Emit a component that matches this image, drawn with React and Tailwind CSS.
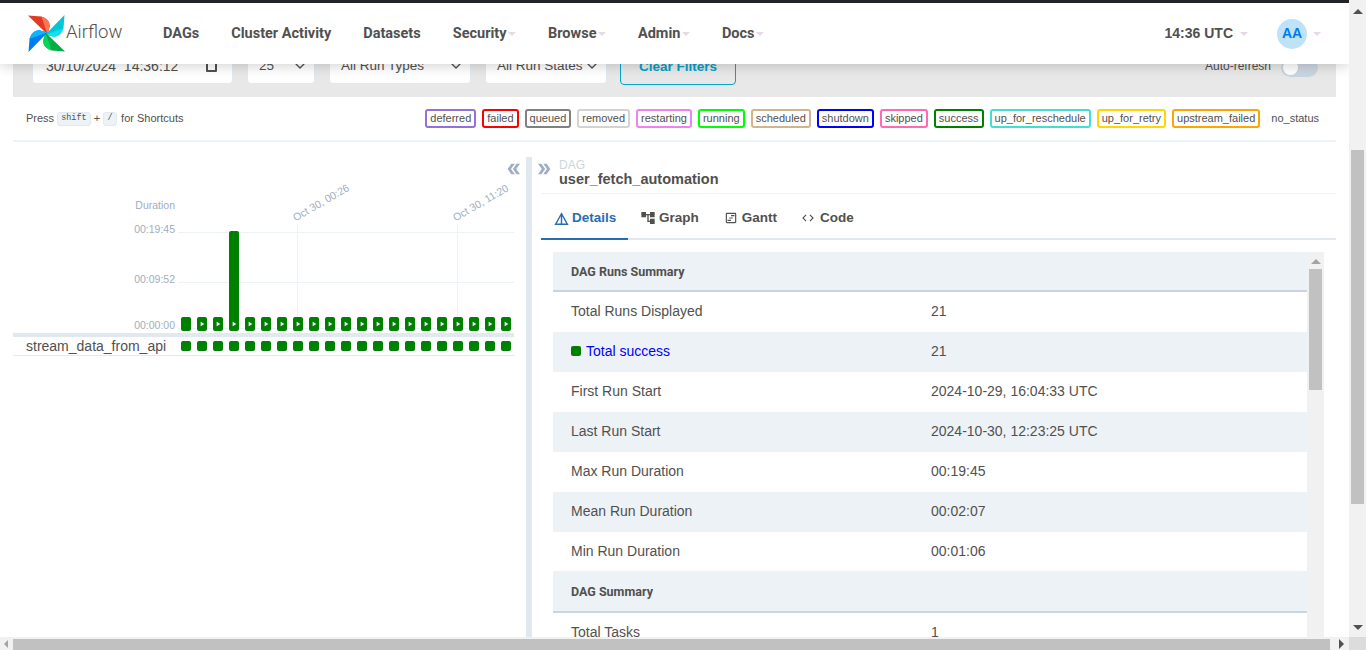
import { MdDetails, MdAccountTree, MdOutlineViewTimeline, MdCode, MdDoubleArrow, MdPlayArrow } from "react-icons/md";
import { FiChevronDown } from "react-icons/fi";

const sans = "font-['Liberation_Sans',Arial,sans-serif]";
const head = "font-['Roboto',Arial,sans-serif]";

const navItems = [
  { label: "DAGs" },
  { label: "Cluster Activity" },
  { label: "Datasets" },
  { label: "Security", caret: true },
  { label: "Browse", caret: true },
  { label: "Admin", caret: true },
  { label: "Docs", caret: true },
];

const legend = [
  { label: "deferred", border: "border-[#9370db]" },
  { label: "failed", border: "border-[#ff0000]" },
  { label: "queued", border: "border-[#808080]" },
  { label: "removed", border: "border-[#d3d3d3]" },
  { label: "restarting", border: "border-[#ee82ee]" },
  { label: "running", border: "border-[#00ff00]" },
  { label: "scheduled", border: "border-[#d2b48c]" },
  { label: "shutdown", border: "border-[#0000ff]" },
  { label: "skipped", border: "border-[#ff69b4]" },
  { label: "success", border: "border-[#008000]" },
  { label: "up_for_reschedule", border: "border-[#40e0d0]" },
  { label: "up_for_retry", border: "border-[#ffd700]" },
  { label: "upstream_failed", border: "border-[#ffa500]" },
  { label: "no_status", border: "border-transparent" },
];

const runs = Array.from({ length: 21 }, (_, i) => i);

const rows = [
  { type: "head", label: "DAG Runs Summary" },
  { label: "Total Runs Displayed", value: "21" },
  { label: "Total success", value: "21", success: true, shaded: true },
  { label: "First Run Start", value: "2024-10-29, 16:04:33 UTC" },
  { label: "Last Run Start", value: "2024-10-30, 12:23:25 UTC", shaded: true },
  { label: "Max Run Duration", value: "00:19:45" },
  { label: "Mean Run Duration", value: "00:02:07", shaded: true },
  { label: "Min Run Duration", value: "00:01:06" },
  { type: "head", label: "DAG Summary", tall: true },
  { label: "Total Tasks", value: "1" },
];

const Caret = ({ className = "" }) => (
  <span className={`inline-block w-0 h-0 border-x-4 border-x-transparent border-t-4 border-t-[#e6d8e6] ${className}`} />
);

const blades = [
  { angle: 0, main: "#e43921", light: "#ff7557" },
  { angle: 90, main: "#00c7d4", light: "#11e1ee" },
  { angle: 180, main: "#00ad46", light: "#04d659" },
  { angle: 270, main: "#017cee", light: "#0cb6ff" },
];

const Logo = () => (
  <svg width="37" height="37" viewBox="0 0 36 36" className="shrink-0">
    {blades.map((b) => (
      <g key={b.angle} transform={`rotate(${b.angle} 18 18)`}>
        <path d="M19 19 L0 0.5 L13 1.5 C18 3 22 7 21 12Z" fill={b.main} />
        <path d="M19 19 L13 1.5 C18 3 22 7 21 12Z" fill={b.light} />
      </g>
    ))}
  </svg>
);

const Navbar = () => (
  <header className="relative z-10 h-[64px] shrink-0 border-t-[3px] border-[#212529] bg-white shadow-[0_2px_12px_rgba(0,0,0,0.18)] flex items-center pl-[28px] pr-[28px]">
    <Logo />
    <span className={`${head} ml-[1px] -mt-[2px] text-[18.5px] font-light text-[#51504f] w-[97px]`}>Airflow</span>
    <nav className={`${head} flex items-center gap-[32px] text-[14.5px] font-bold text-[#51504f]`}>
      {navItems.map((item) => (
        <span key={item.label} className="flex items-center">
          {item.label}
          {item.caret && <Caret className="ml-[1.5px] mt-[1px]" />}
        </span>
      ))}
    </nav>
    <span className={`${sans} ml-auto flex items-center text-[14px] font-bold text-[#51504f]`}>
      14:36 UTC
      <Caret className="ml-[7px]" />
    </span>
    <span className={`${sans} ml-[29px] w-[30px] h-[30px] rounded-full bg-[#bee3f8] flex items-center justify-center text-[14px] font-bold text-[#017cee]`}>
      AA
    </span>
    <Caret className="ml-[6px]" />
  </header>
);

const Select = ({ label, className }) => (
  <div className={`h-[36px] bg-white rounded-[4px] border border-[#e2e8f0] flex items-center justify-between pl-[11px] pr-[6px] text-[13.5px] text-[#51504f] whitespace-nowrap ${className}`}>
    {label}
    <FiChevronDown className="w-[16px] h-[16px] shrink-0" />
  </div>
);

const FilterBar = () => (
  <div className={`${sans} -mt-[19px] h-[52px] bg-[#e8e8e8] flex items-end pb-[13px] pl-[19px] pr-[18px]`}>
    <div className="h-[36px] w-[201px] bg-white rounded-[4px] border border-[#e2e8f0] flex items-center justify-between pl-[13px] pr-[15px] text-[14px] text-[#51504f] whitespace-pre">
      30/10/2024  14:36:12
      <span className="w-[11px] h-[11px] border-2 border-[#51504f] rounded-[1px]" />
    </div>
    <Select label="25" className="ml-[14px] w-[68px]" />
    <Select label="All Run Types" className="ml-[14px] w-[142px]" />
    <Select label="All Run States" className="ml-[14px] w-[122px]" />
    <div className="ml-[13px] h-[36px] -mb-[1px] w-[116px] rounded-[4px] border border-[#00a7cf] text-[#00a0c6] font-bold text-[13.5px] flex items-center justify-center">
      Clear Filters
    </div>
    <span className="ml-auto self-start mt-[12px] text-[12px] text-[#51504f]">Auto-refresh</span>
    <div className="ml-[10px] self-start mt-[13px] w-[37px] h-[19px] rounded-full bg-[#cbd5e0] p-[2px]">
      <div className="w-[15px] h-[15px] rounded-full bg-white" />
    </div>
  </div>
);

const LegendRow = () => (
  <div className={`${sans} h-[45px] border-b-2 border-[#edf2f7] flex items-center pl-[13px] pr-[12px] text-[11px] text-[#51504f]`}>
    <span>Press</span>
    <kbd className="ml-[3px] h-[14px] px-[3px] rounded-[3px] bg-[#edf2f7] border border-[#e2e8f0] font-['Liberation_Mono',monospace] text-[8.5px] flex items-center">shift</kbd>
    <span className="mx-[3px]">+</span>
    <kbd className="h-[14px] w-[14px] justify-center rounded-[3px] bg-[#edf2f7] border border-[#e2e8f0] font-['Liberation_Mono',monospace] text-[8.5px] flex items-center">/</kbd>
    <span className="ml-[4px]">for Shortcuts</span>
    <div className="ml-auto flex items-center gap-[6px]">
      {legend.map((s) => (
        <span key={s.label} className={`h-[19px] px-[3px] rounded-[3px] border-2 ${s.border} flex items-center`}>
          {s.label}
        </span>
      ))}
    </div>
  </div>
);

const DurationChart = () => (
  <div className="relative h-[191px]">
    <svg width="513" height="191" className="block">
      {/* grid, offsets are relative to the top of the panel at y=142 */}
      <line x1="165" x2="501" y1="90.5" y2="90.5" stroke="#edf2f7" />
      <line x1="165" x2="501" y1="140.5" y2="140.5" stroke="#edf2f7" />
      <line x1="165" x2="501" y1="186.5" y2="186.5" stroke="#edf2f7" />
      <line x1="284.5" x2="284.5" y1="81" y2="175" stroke="#edf2f7" />
      <line x1="444.5" x2="444.5" y1="81" y2="175" stroke="#edf2f7" />
      <g fontFamily="'Liberation Sans',Arial,sans-serif" fontSize="10.5" fill="#a0aec0" textAnchor="end">
        <text x="162" y="67">Duration</text>
        <text x="162" y="91">00:19:45</text>
        <text x="162" y="141">00:09:52</text>
        <text x="162" y="187">00:00:00</text>
        <text transform="translate(285 78) rotate(-30) translate(-3 0)" textAnchor="start" x="0" y="0">Oct 30, 00:26</text>
        <text transform="translate(445 78) rotate(-30) translate(-3 0)" textAnchor="start" x="0" y="0">Oct 30, 11:20</text>
      </g>
    </svg>
    <div className="absolute left-[168px] bottom-[2px] flex items-end gap-[6px]">
      {runs.map((i) => (
        <div key={i} className={`w-[10px] ${i === 3 ? "h-[100px]" : "h-[14px]"} rounded-[2px] bg-[#008000] flex items-end justify-center`}>
          {i !== 0 && <MdPlayArrow className="text-white w-[8px] h-[8px] mb-[3px]" />}
        </div>
      ))}
    </div>
  </div>
);

const LeftPanel = () => (
  <div className={`${sans} relative w-[513px] shrink-0`}>
    <MdDoubleArrow className="absolute top-[18px] right-[3px] w-[18px] h-[18px] rotate-180 text-[#a0aec0]" />
    <DurationChart />
    <div className="w-[501px] h-[4px] bg-[#e2e8f0]" />
    <div className="w-[501px] h-[19px] border-b border-[#e2e8f0] flex items-center text-[14px] text-[#51504f]">
      <span className="w-[168px] pl-[13px]">stream_data_from_api</span>
      <div className="flex gap-[6px]">
        {runs.map((i) => (
          <div key={i} className="w-[10px] h-[10px] rounded-[2px] bg-[#008000]" />
        ))}
      </div>
    </div>
  </div>
);

const Tabs = () => (
  <div className="ml-[9px] mt-[4px] h-[42px] border-b-2 border-[#e2e8f0] flex text-[13.5px] font-bold text-[#51504f]">
    <div className="-mb-[2px] w-[87px] border-b-2 border-[#2b6cb0] text-[#2b6cb0] flex items-center pl-[12px] gap-[2px]">
      <MdDetails className="w-[17px] h-[17px]" />
      Details
    </div>
    <div className="ml-[12px] flex items-center gap-[3px]">
      <MdAccountTree className="w-[16px] h-[16px]" />
      Graph
    </div>
    <div className="ml-[25px] flex items-center gap-[4px]">
      <MdOutlineViewTimeline className="w-[14px] h-[14px]" />
      Gantt
    </div>
    <div className="ml-[24px] flex items-center gap-[5px]">
      <MdCode className="w-[14px] h-[14px]" />
      Code
    </div>
  </div>
);

const ScrollArrow = ({ down, className = "" }) => (
  <span className={`block w-0 h-0 border-x-[5px] border-x-transparent ${down ? "border-t-[5px] border-t-[#505050]" : "border-b-[5px] border-b-[#a3a3a3]"} ${className}`} />
);

const DetailsTable = () => (
  <div className="mt-[12px] ml-[21px] mr-[12px] h-[385px] flex overflow-hidden">
    <div className="flex-1 min-w-0">
      {rows.map((r) =>
        r.type === "head" ? (
          <div key={r.label} className={`${head} ${r.tall ? "h-[42px] -mt-px" : "h-[40px]"} pt-[2px] bg-[#edf2f7] border-b-2 border-[#cbd5e0] flex items-center pl-[18px] text-[12.5px] font-bold text-[#51504f]`}>
            {r.label}
          </div>
        ) : (
          <div key={r.label} className={`h-[40px] pb-[2px] flex items-center pl-[18px] text-[14px] text-[#51504f] ${r.shaded ? "bg-[#edf2f7]" : "bg-white"}`}>
            <span className="w-[360px] flex items-center">
              {r.success && <span className="w-[10px] h-[10px] rounded-[2px] bg-[#008000] mr-[5px]" />}
              <span className={r.success ? "text-[#0000ff]" : ""}>{r.label}</span>
            </span>
            <span>{r.value}</span>
          </div>
        )
      )}
    </div>
    <div className="w-[17px] shrink-0 bg-[#f1f1f1] flex flex-col items-center">
      <ScrollArrow className="mt-[7px]" />
      <div className="mt-[5px] w-[13px] h-[121px] bg-[#c1c1c1]" />
    </div>
  </div>
);

const RightPanel = () => (
  <div className={`${sans} flex-1 min-w-0`}>
    <div className="relative h-[52px] border-b border-[#edf2f7] ml-[9px] pl-[18px] pt-[16px]">
      <MdDoubleArrow className="absolute left-[-6px] top-[18px] w-[18px] h-[18px] text-[#a0aec0]" />
      <div className="text-[12px] leading-[14px] text-[#cbd5e0]">DAG</div>
      <div className="text-[14.5px] leading-[14px] font-bold text-[#51504f]">user_fetch_automation</div>
    </div>
    <Tabs />
    <DetailsTable />
  </div>
);

const PageScrollbar = () => (
  <div className="w-[17px] shrink-0 bg-[#f1f1f1] flex flex-col items-center">
    <ScrollArrow className="mt-[9px] !border-b-[#505050]" />
    <div className="mt-[136px] w-[13px] h-[354px] bg-[#c1c1c1]" />
    <ScrollArrow down className="mt-auto mb-[7px]" />
  </div>
);

const BottomScrollbar = () => (
  <div className="h-[13px] shrink-0 bg-[#f1f1f1] flex items-center">
    <span className="ml-[4px] w-0 h-0 border-y-[4px] border-y-transparent border-r-[4px] border-r-[#a3a3a3]" />
    <div className="ml-[5px] w-[1317px] h-[11px] mt-[2px] bg-[#c1c1c1]" />
    <span className="ml-[9px] w-0 h-0 border-y-[5px] border-y-transparent border-l-[5px] border-l-[#505050]" />
    <div className="ml-auto w-[17px] h-[13px] bg-[#dcdcdc]" />
  </div>
);

export default function App() {
  return (
    <div className="w-[1366px] h-[650px] overflow-hidden flex flex-col bg-white">
      <div className="flex flex-1 min-h-0">
        <div className="flex-1 min-w-0 flex flex-col overflow-hidden">
          <Navbar />
          <div className="px-[13px]">
            <FilterBar />
            <LegendRow />
            <div className="flex h-[497px]">
              <LeftPanel />
              <div className="w-[6px] shrink-0 mt-[15px] bg-[#e2e8f0]" />
              <RightPanel />
            </div>
          </div>
        </div>
        <PageScrollbar />
      </div>
      <BottomScrollbar />
    </div>
  );
}
